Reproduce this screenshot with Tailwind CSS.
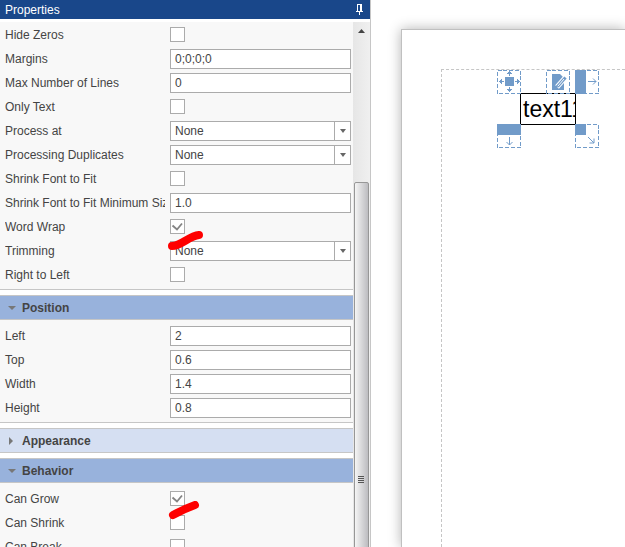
<!DOCTYPE html>
<html lang="en">
<head>
    <meta charset="UTF-8">
    <meta name="viewport" content="width=device-width, initial-scale=1.0">
    <title>Report Designer</title>
    <script src="https://cdn.jsdelivr.net/npm/@tailwindcss/browser@4"></script>
</head>
<body class="bg-white font-['Liberation_Sans',Arial,sans-serif] text-xs text-[#444444]">
    <div class="flex h-screen overflow-hidden">

        <!-- Properties panel -->
        <aside class="flex w-[371px] shrink-0 flex-col border-r border-[#c6c6c6]">
            <header class="flex h-[19px] shrink-0 items-center justify-between bg-[#19478a] pl-[5px] pr-1.5 text-white">
                <h1>Properties</h1>
                <button type="button" aria-label="Pin panel">
                    <svg class="block" width="9" height="13" viewBox="0 0 9 13" fill="none" stroke="currentColor" shape-rendering="crispEdges">
                        <path d="M2.5 1v7M2 1.5h5M5.5 1v7M6.5 1v7M1 8.5h7M4.5 8v4"/>
                    </svg>
                </button>
            </header>

            <div class="mt-[3px] flex min-h-0 flex-1">
                <div class="min-w-0 flex-1 overflow-hidden">

                    <!-- Text options -->
                    <section class="border-b border-[#c6c6c6] bg-[#f8f8f8] pb-0.5 pt-px">
                        <div class="flex h-6 items-center pl-[5px] pr-0.5">
                            <label for="hideZeros" class="mr-[5px] w-40 shrink-0 overflow-hidden whitespace-nowrap">Hide Zeros</label>
                            <input id="hideZeros" type="checkbox" class="mt-1 size-[15px] appearance-none self-start border border-[#ababab] bg-white">
                        </div>
                        <div class="flex h-6 items-center pl-[5px] pr-0.5">
                            <label for="margins" class="mr-[5px] w-40 shrink-0 overflow-hidden whitespace-nowrap">Margins</label>
                            <input id="margins" type="text" value="0;0;0;0" class="h-5 min-w-0 flex-1 border border-[#ababab] bg-white px-1">
                        </div>
                        <div class="flex h-6 items-center pl-[5px] pr-0.5">
                            <label for="maxLines" class="mr-[5px] w-40 shrink-0 overflow-hidden whitespace-nowrap">Max Number of Lines</label>
                            <input id="maxLines" type="text" value="0" class="h-5 min-w-0 flex-1 border border-[#ababab] bg-white px-1">
                        </div>
                        <div class="flex h-6 items-center pl-[5px] pr-0.5">
                            <label for="onlyText" class="mr-[5px] w-40 shrink-0 overflow-hidden whitespace-nowrap">Only Text</label>
                            <input id="onlyText" type="checkbox" class="mt-1 size-[15px] appearance-none self-start border border-[#ababab] bg-white">
                        </div>
                        <div class="flex h-6 items-center pl-[5px] pr-0.5">
                            <label for="processAt" class="mr-[5px] w-40 shrink-0 overflow-hidden whitespace-nowrap">Process at</label>
                            <div class="relative h-5 flex-1">
                                <select id="processAt" class="block h-5 w-full appearance-none border border-[#ababab] bg-white pl-1">
                                    <option>None</option>
                                </select>
                                <span class="pointer-events-none absolute inset-y-0 right-0 flex w-[17px] items-center justify-center border-l border-[#ababab]">
                                    <svg width="6" height="4" viewBox="0 0 6 4" fill="#666666"><path d="M0 0h6L3 4z"/></svg>
                                </span>
                            </div>
                        </div>
                        <div class="flex h-6 items-center pl-[5px] pr-0.5">
                            <label for="duplicates" class="mr-[5px] w-40 shrink-0 overflow-hidden whitespace-nowrap">Processing Duplicates</label>
                            <div class="relative h-5 flex-1">
                                <select id="duplicates" class="block h-5 w-full appearance-none border border-[#ababab] bg-white pl-1">
                                    <option>None</option>
                                </select>
                                <span class="pointer-events-none absolute inset-y-0 right-0 flex w-[17px] items-center justify-center border-l border-[#ababab]">
                                    <svg width="6" height="4" viewBox="0 0 6 4" fill="#666666"><path d="M0 0h6L3 4z"/></svg>
                                </span>
                            </div>
                        </div>
                        <div class="flex h-6 items-center pl-[5px] pr-0.5">
                            <label for="shrinkFont" class="mr-[5px] w-40 shrink-0 overflow-hidden whitespace-nowrap">Shrink Font to Fit</label>
                            <input id="shrinkFont" type="checkbox" class="mt-1 size-[15px] appearance-none self-start border border-[#ababab] bg-white">
                        </div>
                        <div class="flex h-6 items-center pl-[5px] pr-0.5">
                            <label for="minSize" class="mr-[5px] w-40 shrink-0 overflow-hidden whitespace-nowrap">Shrink Font to Fit Minimum Size</label>
                            <input id="minSize" type="text" value="1.0" class="h-5 min-w-0 flex-1 border border-[#ababab] bg-white px-1">
                        </div>
                        <div class="flex h-6 items-center pl-[5px] pr-0.5">
                            <label for="wordWrap" class="mr-[5px] w-40 shrink-0 overflow-hidden whitespace-nowrap">Word Wrap</label>
                            <div class="relative mt-1 size-[15px] self-start">
                                <input id="wordWrap" type="checkbox" checked class="peer block size-[15px] appearance-none border border-[#ababab] bg-white">
                                <svg class="pointer-events-none invisible absolute inset-0 peer-checked:visible" width="15" height="15" viewBox="0 0 15 15" fill="none" stroke="#848484" stroke-width="1.8"><path d="M2.500 6.500l4.500 4 5-6"/></svg>
                                <!-- red marker -->
                                <svg class="pointer-events-none absolute -left-1 top-2.5 z-10" width="40" height="22" viewBox="0 0 40 22" fill="none" stroke="#fe0000" stroke-width="8" stroke-linecap="round"><path d="M6 17C15 17 23 7 33 6"/></svg>
                            </div>
                        </div>
                        <div class="flex h-6 items-center pl-[5px] pr-0.5">
                            <label for="trimming" class="mr-[5px] w-40 shrink-0 overflow-hidden whitespace-nowrap">Trimming</label>
                            <div class="relative h-5 flex-1">
                                <select id="trimming" class="block h-5 w-full appearance-none border border-[#ababab] bg-white pl-1">
                                    <option>None</option>
                                </select>
                                <span class="pointer-events-none absolute inset-y-0 right-0 flex w-[17px] items-center justify-center border-l border-[#ababab]">
                                    <svg width="6" height="4" viewBox="0 0 6 4" fill="#666666"><path d="M0 0h6L3 4z"/></svg>
                                </span>
                            </div>
                        </div>
                        <div class="flex h-6 items-center pl-[5px] pr-0.5">
                            <label for="rightToLeft" class="mr-[5px] w-40 shrink-0 overflow-hidden whitespace-nowrap">Right to Left</label>
                            <input id="rightToLeft" type="checkbox" class="mt-1 size-[15px] appearance-none self-start border border-[#ababab] bg-white">
                        </div>
                    </section>

                    <!-- Position -->
                    <button type="button" class="mt-[5px] flex h-[25px] w-full items-center gap-1.5 border-y border-[#c6c6c6] bg-[#98b2dc] pl-2 font-bold">
                        <svg width="8" height="4" viewBox="0 0 8 4" fill="#777777"><path d="M0 0h8L4 4z"/></svg>
                        Position
                    </button>
                    <section class="border-b border-[#c6c6c6] bg-[#f8f8f8] pb-0.5 pt-1">
                        <div class="flex h-6 items-center pl-[5px] pr-0.5">
                            <label for="left" class="mr-[5px] w-40 shrink-0">Left</label>
                            <input id="left" type="text" value="2" class="h-5 min-w-0 flex-1 border border-[#ababab] bg-white px-1">
                        </div>
                        <div class="flex h-6 items-center pl-[5px] pr-0.5">
                            <label for="top" class="mr-[5px] w-40 shrink-0">Top</label>
                            <input id="top" type="text" value="0.6" class="h-5 min-w-0 flex-1 border border-[#ababab] bg-white px-1">
                        </div>
                        <div class="flex h-6 items-center pl-[5px] pr-0.5">
                            <label for="width" class="mr-[5px] w-40 shrink-0">Width</label>
                            <input id="width" type="text" value="1.4" class="h-5 min-w-0 flex-1 border border-[#ababab] bg-white px-1">
                        </div>
                        <div class="flex h-6 items-center pl-[5px] pr-0.5">
                            <label for="height" class="mr-[5px] w-40 shrink-0">Height</label>
                            <input id="height" type="text" value="0.8" class="h-5 min-w-0 flex-1 border border-[#ababab] bg-white px-1">
                        </div>
                    </section>

                    <!-- Appearance, collapsed -->
                    <button type="button" class="mt-[5px] flex h-[25px] w-full items-center gap-1.5 border-y border-[#c6c6c6] bg-[#d5dff2] pl-2 font-bold">
                        <svg width="8" height="8" viewBox="0 0 8 8" fill="#777777"><path d="M1 0l4 4-4 4z"/></svg>
                        Appearance
                    </button>

                    <!-- Behavior -->
                    <button type="button" class="mt-[5px] flex h-[25px] w-full items-center gap-1.5 border-y border-[#c6c6c6] bg-[#98b2dc] pl-2 font-bold">
                        <svg width="8" height="4" viewBox="0 0 8 4" fill="#777777"><path d="M0 0h8L4 4z"/></svg>
                        Behavior
                    </button>
                    <section class="bg-[#f8f8f8] pb-0.5 pt-1">
                        <div class="flex h-6 items-center pl-[5px] pr-0.5">
                            <label for="canGrow" class="mr-[5px] w-40 shrink-0">Can Grow</label>
                            <div class="relative mt-1 size-[15px] self-start">
                                <input id="canGrow" type="checkbox" checked class="peer block size-[15px] appearance-none border border-[#ababab] bg-white">
                                <svg class="pointer-events-none invisible absolute inset-0 peer-checked:visible" width="15" height="15" viewBox="0 0 15 15" fill="none" stroke="#848484" stroke-width="1.8"><path d="M2.500 6.500l4.500 4 5-6"/></svg>
                                <!-- red marker -->
                                <svg class="pointer-events-none absolute -left-1 top-2.5 z-10" width="40" height="22" viewBox="0 0 40 22" fill="none" stroke="#fe0000" stroke-width="8" stroke-linecap="round"><path d="M7 14Q18 8 29 4"/></svg>
                            </div>
                        </div>
                        <div class="flex h-6 items-center pl-[5px] pr-0.5">
                            <label for="canShrink" class="mr-[5px] w-40 shrink-0">Can Shrink</label>
                            <input id="canShrink" type="checkbox" class="mt-1 size-[15px] appearance-none self-start border border-[#ababab] bg-white">
                        </div>
                        <div class="flex h-6 items-center pl-[5px] pr-0.5">
                            <label for="canBreak" class="mr-[5px] w-40 shrink-0">Can Break</label>
                            <input id="canBreak" type="checkbox" class="mt-1 size-[15px] appearance-none self-start border border-[#ababab] bg-white">
                        </div>
                    </section>
                </div>

                <!-- Scrollbar -->
                <div class="flex w-[17px] shrink-0 flex-col bg-linear-to-r from-[#e6e6e6] to-[#f0f0f0] pl-px pr-px">
                    <button type="button" aria-label="Scroll up" class="flex h-[17px] shrink-0 items-center justify-center">
                        <svg width="7" height="4" viewBox="0 0 7 4" fill="#444444"><path d="M0 4h7L3.500 0z"/></svg>
                    </button>
                    <div class="mt-[143px] flex h-[595px] shrink-0 items-center justify-center rounded-xs border border-[#979797] bg-linear-to-r from-[#f5f5f5] via-[#d8d8da] to-[#bcbcc0]">
                        <svg width="7" height="8" viewBox="0 0 7 8" stroke="#555555" shape-rendering="crispEdges"><path d="M0 .5h6M0 2.500h6M0 4.500h6M0 6.500h6"/></svg>
                    </div>
                </div>
            </div>
        </aside>

        <!-- Report page -->
        <main class="min-w-0 flex-1 overflow-hidden pl-[30px] pt-[29px]">
            <div class="h-full border-l border-t border-[#c0c0c0] bg-white pl-[39px] pt-[39px] shadow-[0_0_12px_rgba(0,0,0,0.3)]">
                <div class="relative h-full border-l border-t border-dashed border-[#c6c6c6]">

                    <div class="absolute left-[78px] top-[23px] h-8 w-14 overflow-hidden whitespace-nowrap border border-black bg-white pl-0.5 text-[23px] leading-[30px] text-black">text11</div>

                    <svg class="absolute left-[55px] top-0" width="104" height="80" viewBox="0 0 104 80" fill="none" stroke="#719bc9" shape-rendering="crispEdges">
                        <!-- handle frames -->
                        <g stroke-dasharray="4 1.75">
                            <path d="M.5 .5h23v23h-23zM49.500 .5h23v23h-23zM78.500 .5h23v23h-23zM.5 54.500h23v23h-23zM78.500 54.500h23v23h-23z"/>
                        </g>
                        <g fill="#719bc9" stroke="none">
                            <path d="M8 7h9v9H8zM78 0h11v24H78zM0 54h24v11H0zM78 54h11v11H78z"/>
                        </g>
                        <!-- move -->
                        <path d="M12.500 1v5M11 2.500h3M10 3.500h5M12.500 17v5M10 19.500h5M11 20.500h3M2 11.500h5M3.500 10v3M4.500 9v5M18 11.500h5M20.500 9v5M21.500 10v3"/>
                        <!-- resize arrows -->
                        <g shape-rendering="auto">
                            <path d="M91 11.500h8M96 8.500l3 3-3 3M12.500 67v8M9.500 72l3 3 3-3M91 67l6 6M97 68.500V73h-4.500"/>
                        </g>
                        <!-- edit -->
                        <g shape-rendering="auto" stroke="none">
                            <path fill="#719bc9" d="M55 4h8l4 4v12H55z"/>
                            <path stroke="#ffffff" stroke-width="5" d="M60 17l8-9"/>
                            <path stroke="#719bc9" stroke-width="3" d="M60.500 16.500l8-9"/>
                            <path stroke="#ffffff" d="M61 16l6-7"/>
                            <path fill="#719bc9" d="M58 18l1-3 2 2z"/>
                        </g>
                    </svg>
                </div>
            </div>
        </main>

    </div>
</body>
</html>
